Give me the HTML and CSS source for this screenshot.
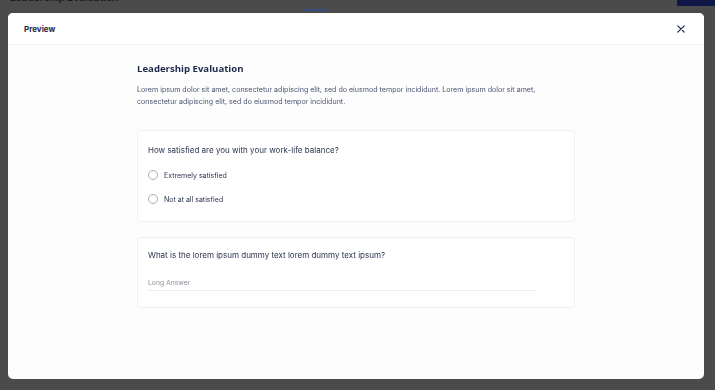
FILE: index.html
```html
<!DOCTYPE html>
<html lang="en">
<head>
    <meta charset="UTF-8">
    <meta name="viewport" content="width=device-width, initial-scale=1.0">
    <title>Leadership Evaluation - Preview</title>
    <link rel="stylesheet" href="styles.css">
</head>
<body>
    <div class="topbar">
        <div class="page-title">Leadership Evaluation</div>
        <div class="tabs">
            <span class="tab active">Create</span>
            <span class="tab">Share</span>
            <span class="tab">Results</span>
        </div>
        <div class="publish"></div>
    </div>

    <!-- Preview modal -->
    <div class="overlay">
        <div class="modal">
            <div class="modal-header">
                <span class="modal-title">Preview</span>
                <svg class="close" width="8" height="8" viewBox="0 0 10 10">
                    <path d="M1 1L9 9M9 1L1 9" stroke="#1e2a4a" stroke-width="1.5" stroke-linecap="round"/>
                </svg>
            </div>
            <div class="modal-body">
                <div class="form">
                    <h2>Leadership Evaluation</h2>
                    <p class="desc">Lorem ipsum dolor sit amet, consectetur adipiscing elit, sed do eiusmod tempor incididunt. Lorem ipsum dolor sit amet, consectetur adipiscing elit, sed do eiusmod tempor incididunt.</p>

                    <div class="card">
                        <div class="question">How satisfied are you with your work-life balance?</div>
                        <label class="option"><span class="radio"></span>Extremely satisfied</label>
                        <label class="option"><span class="radio"></span>Not at all satisfied</label>
                    </div>

                    <div class="card card-text">
                        <div class="question">What is the lorem ipsum dummy text lorem dummy text ipsum?</div>
                        <div class="answer">Long Answer</div>
                    </div>
                </div>
            </div>
        </div>
    </div>
</body>
</html>
```

FILE: styles.css
```css
body {
    margin: 0;
    font-family: Inter, "Liberation Sans", sans-serif;
    background-color: #4b4b4b;
    height: 390px;
    overflow: hidden;
}
.topbar {
    height: 13px;
    display: flex;
    align-items: flex-start;
    overflow: hidden;
}
.page-title {
    margin-top: -9px;
    margin-left: 10px;
    font-size: 10px;
    font-weight: bold;
    color: #1c1c1c;
    width: 293px;
}
.tabs {
    display: flex;
    gap: 24px;
    flex: 1;
}
.tab {
    margin-top: -8px;
    font-size: 8px;
    color: #3e3e3e;
    padding-bottom: 7px;
}
.tab.active {
    color: #2a3350;
    border-bottom: 2px solid #3d4d7d;
}
.publish {
    width: 38px;
    height: 6px;
    background-color: #0e1747;
}
.overlay {
    position: fixed;
    left: 0;
    top: 0;
    width: 100%;
    height: 100%;
}
.modal {
    position: absolute;
    left: 8px;
    top: 13px;
    width: 696px;
    height: 366px;
    background-color: #fdfdfd;
    border-radius: 5px;
    display: flex;
    flex-direction: column;
    overflow: hidden;
}
.modal-header {
    height: 31px;
    flex-shrink: 0;
    display: flex;
    align-items: center;
    justify-content: space-between;
    padding: 0 19px 0 16px;
    background-color: #fff;
    border-bottom: 1px solid #f0f1f3;
}
.modal-title {
    font-size: 8px;
    font-weight: 700;
    color: #1e2a4a;
}
.modal-body {
    flex: 1;
    display: flex;
    justify-content: center;
}
.form {
    width: 438px;
    padding-top: 17px;
}
.form h2 {
    margin: 0;
    font-family: "Open Sans", sans-serif;
    font-size: 9.6px;
    font-weight: 700;
    color: #1e2a4a;
}
.desc {
    margin: 9px 0 22px;
    font-size: 7.1px;
    line-height: 12px;
    color: #4a5470;
}
.card {
    border: 1px solid #eef0f3;
    border-radius: 4px;
    padding: 14px 10px 10px;
    margin-bottom: 15px;
    background-color: #fff;
}
.card-text {
    padding-top: 12px;
}
.question {
    font-size: 8px;
    color: #2a3350;
    margin-bottom: 8px;
}
.option {
    display: flex;
    align-items: center;
    gap: 6px;
    font-size: 7px;
    color: #2a3350;
    height: 24px;
}
.radio {
    width: 8px;
    height: 8px;
    border: 1px solid #a9aeb8;
    border-radius: 50%;
}
.answer {
    margin-top: 18px;
    margin-bottom: 6px;
    width: 389px;
    font-size: 6.8px;
    color: #8d929c;
    padding-bottom: 3px;
    border-bottom: 1px solid #eceef1;
}
```
